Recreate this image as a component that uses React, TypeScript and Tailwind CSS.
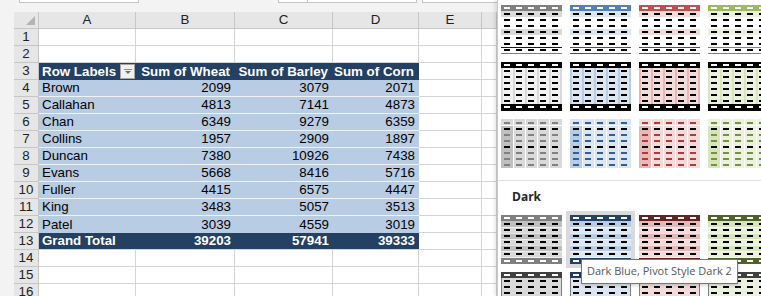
import React from "react";

const FONT = { fontFamily: '"Liberation Sans", Arial, sans-serif' };
const UI = { fontFamily: '"Open Sans", "Noto Sans", sans-serif' };

const COLS = [0, 1, 2, 3, 4];
const ROWS8 = [0, 1, 2, 3, 4, 5, 6, 7];

function dashes(y: number, color: string, k: string, dx = 3) {
  return COLS.map((c) => (
    <rect key={k + c} x={12 * c + dx} y={y} width={6} height={2} fill={color} />
  ));
}

function SwA({ a, t, l1, l2 }: { a: string; t: string; l1: string; l2: string }) {
  return (
    <svg width={61} height={49} viewBox="0 0 61 49" shapeRendering="crispEdges">
      <rect x={0} y={0} width={61} height={49} fill="#fff" />
      <rect x={0} y={0} width={61} height={6} fill={a} />
      <rect x={0} y={6} width={61} height={6} fill={t} />
      <rect x={0} y={24} width={61} height={6} fill={t} />
      <rect x={0} y={42} width={61} height={1} fill={l1} />
      <rect x={0} y={48} width={61} height={1} fill={l2} />
      {ROWS8.map((r) => dashes(6 * r + 2, r === 0 ? "#fff" : "#000", "a" + r))}
    </svg>
  );
}

function SwB({ t, s }: { t: string; s: string }) {
  return (
    <svg width={61} height={49} viewBox="0 0 61 49" shapeRendering="crispEdges">
      <rect x={0} y={0} width={61} height={49} fill={t} />
      {[0, 1, 2, 3, 4, 5].map((c) => (
        <rect key={c} x={c === 0 ? 0 : c === 5 ? 59 : 12 * c} y={6} width={2} height={37} fill={s} />
      ))}
      <rect x={0} y={0} width={61} height={6} fill="#000" />
      <rect x={0} y={42} width={61} height={7} fill="#000" />
      {ROWS8.map((r) => dashes(6 * r + 2, r === 0 || r === 7 ? "#fff" : "#000", "b" + r))}
    </svg>
  );
}

function SwC({ t, m, d }: { t: string; m: string; d: string }) {
  return (
    <svg width={61} height={49} viewBox="0 0 61 49" shapeRendering="crispEdges">
      <rect x={0} y={0} width={61} height={49} fill={t} />
      <rect x={0} y={7} width={12} height={42} fill={m} />
      <rect x={0} y={6} width={61} height={1} fill="#fff" />
      {[1, 2, 3, 4].map((c) => (
        <rect key={c} x={12 * c} y={0} width={1} height={49} fill="#fff" />
      ))}
      {ROWS8.map((r) => dashes(6 * r + 3, r === 1 || r === 4 ? "#000" : d, "c" + r))}
    </svg>
  );
}

function SwD({ h, l, m }: { h: string; l: string; m: string }) {
  return (
    <svg width={61} height={49} viewBox="0 0 61 49" shapeRendering="crispEdges">
      <rect x={0} y={0} width={61} height={49} fill={l} />
      {[1, 3, 5].map((r) => (
        <rect key={r} x={0} y={6 * r} width={61} height={6} fill={m} />
      ))}
      {[1, 2, 3, 4, 5, 6].map((r) => (
        <rect key={"w" + r} x={0} y={6 * r + 6} width={61} height={1} fill="#fff" opacity={0.6} />
      ))}
      <rect x={0} y={0} width={61} height={6} fill={h} />
      <rect x={0} y={43} width={61} height={6} fill={h} />
      {ROWS8.map((r) =>
        dashes(r === 7 ? 45 : 6 * r + 2, r === 0 || r === 7 ? "#fff" : "#000", "d" + r)
      )}
    </svg>
  );
}

function SwE({ h, b }: { h: string; b: string }) {
  return (
    <svg width={61} height={49} viewBox="0 0 61 49" shapeRendering="crispEdges">
      <rect x={0} y={0} width={61} height={49} fill={b} />
      <rect x={0.5} y={0.5} width={60} height={48} fill="none" stroke="#7f7f7f" />
      <rect x={0} y={0} width={61} height={6} fill={h} />
      {ROWS8.map((r) => dashes(6 * r + 2, r === 0 ? "#fff" : "#000", "e" + r))}
    </svg>
  );
}

function Item({ children, hover }: { children: React.ReactNode; hover?: boolean }) {
  return (
    <div className={`w-[69px] h-[57px] shrink-0 p-[4px] ${hover ? "bg-[#dadada]" : ""}`}>
      {children}
    </div>
  );
}

const data: [string, number, number, number][] = [
  ["Brown", 2099, 3079, 2071],
  ["Callahan", 4813, 7141, 4873],
  ["Chan", 6349, 9279, 6359],
  ["Collins", 1957, 2909, 1897],
  ["Duncan", 7380, 10926, 7438],
  ["Evans", 5668, 8416, 5716],
  ["Fuller", 4415, 6575, 4447],
  ["King", 3483, 5057, 3513],
  ["Patel", 3039, 4559, 3019],
];

function RowHdr({ n }: { n: number }) {
  return (
    <div className="w-[25px] shrink-0 h-full flex items-center justify-center bg-[#e6e6e6] border-r border-b border-[#c6c6c6] text-[#222]">
      {n}
    </div>
  );
}

function Gutter() {
  return <div className="w-[14px] shrink-0 h-full bg-[#f3f3f3]" />;
}

function Blank({ w }: { w: string }) {
  return <div className={`${w} shrink-0 h-full border-r border-b border-[#d4d4d4]`} />;
}

function EF() {
  return (
    <>
      <Blank w="w-[63px]" />
      <Blank w="w-[15px]" />
    </>
  );
}

function EmptyRow({ n }: { n: number }) {
  return (
    <div className="flex h-[17px] shrink-0">
      <Gutter />
      <RowHdr n={n} />
      <Blank w="w-[97px]" />
      <Blank w="w-[99px]" />
      <Blank w="w-[98px]" />
      <Blank w="w-[86px]" />
      <EF />
    </div>
  );
}

function Sheet() {
  return (
    <div className="w-[497px] shrink-0 h-[296px] overflow-hidden flex flex-col text-[13.33px] leading-none" style={FONT}>
      <div className="h-[12px] shrink-0 bg-[#f3f3f3] flex">
        <div className="ml-[19px] w-[120px] h-[3px] bg-white border-x border-b border-[#c6c6c6]" />
        <div className="ml-[139px] w-[30px] h-[3px] bg-white border-x border-b border-[#c6c6c6]" />
        <div className="ml-[0px] w-[109px] h-[3px] bg-white border-r border-b border-[#c6c6c6]" />
        <div className="ml-[5px] flex-1 h-[3px] bg-white border-l border-b border-[#c6c6c6]" />
      </div>
      <div className="flex h-[17px] shrink-0">
        <Gutter />
        <div className="w-[25px] shrink-0 h-full bg-[#e6e6e6] border-r border-b border-[#c6c6c6] relative">
          <svg className="absolute right-[3px] bottom-[3px]" width={9} height={9} viewBox="0 0 9 9">
            <polygon points="9,0 9,9 0,9" fill="#b4b4b4" />
          </svg>
        </div>
        {[
          ["A", "w-[97px]"],
          ["B", "w-[99px]"],
          ["C", "w-[98px]"],
          ["D", "w-[86px]"],
          ["E", "w-[63px]"],
          ["", "w-[15px]"],
        ].map(([l, w]) => (
          <div
            key={w}
            className={`${w} shrink-0 h-full flex items-center justify-center bg-[#e6e6e6] border-r border-b border-[#c6c6c6] text-[#222]`}
          >
            {l}
          </div>
        ))}
      </div>
      <EmptyRow n={1} />
      <EmptyRow n={2} />
      <div className="flex h-[17px] shrink-0">
        <Gutter />
        <RowHdr n={3} />
        <div className="w-[97px] shrink-0 h-full bg-[#244062] text-white font-bold flex items-center pl-[3px] relative">
          Row Labels
          <div className="absolute right-[1px] top-[1px] w-[15px] h-[15px] bg-[#f0f0f0] border border-[#a5a5a5] flex items-center justify-center">
            <svg width={8} height={6} viewBox="0 0 8 6">
              <rect x={0} y={0} width={8} height={1} fill="#8a8a8a" />
              <polygon points="1,2 7,2 4,5" fill="#6d6d6d" />
            </svg>
          </div>
        </div>
        <div className="w-[99px] shrink-0 h-full bg-[#244062] text-white font-bold flex items-center justify-end pr-[5px]">
          Sum of Wheat
        </div>
        <div className="w-[98px] shrink-0 h-full bg-[#244062] text-white font-bold flex items-center justify-end pr-[5px]">
          Sum of Barley
        </div>
        <div className="w-[86px] shrink-0 h-full bg-[#244062] text-white font-bold flex items-center justify-end pr-[5px]">
          Sum of Corn
        </div>
        <EF />
      </div>
      {data.map(([name, a, b, c], i) => (
        <div key={name} className="flex h-[17px] shrink-0">
          <Gutter />
          <RowHdr n={i + 4} />
          <div className={`w-[97px] shrink-0 h-full bg-[#b8cce4] flex items-center pl-[3px] text-black ${i < 8 ? "border-b border-[#eef3f9]" : ""}`}>
            {name}
          </div>
          <div className={`w-[99px] shrink-0 h-full bg-[#b8cce4] flex items-center justify-end pr-[4px] text-black ${i < 8 ? "border-b border-[#eef3f9]" : ""}`}>
            {a}
          </div>
          <div className={`w-[98px] shrink-0 h-full bg-[#b8cce4] flex items-center justify-end pr-[4px] text-black ${i < 8 ? "border-b border-[#eef3f9]" : ""}`}>
            {b}
          </div>
          <div className={`w-[86px] shrink-0 h-full bg-[#b8cce4] flex items-center justify-end pr-[4px] text-black ${i < 8 ? "border-b border-[#eef3f9]" : ""}`}>
            {c}
          </div>
          <EF />
        </div>
      ))}
      <div className="flex h-[17px] shrink-0">
        <Gutter />
        <RowHdr n={13} />
        <div className="w-[97px] shrink-0 h-full bg-[#244062] text-white font-bold flex items-center pl-[3px] border-b border-[#d4d4d4]">
          Grand Total
        </div>
        <div className="w-[99px] shrink-0 h-full bg-[#244062] text-white font-bold flex items-center justify-end pr-[4px] border-b border-[#d4d4d4]">
          39203
        </div>
        <div className="w-[98px] shrink-0 h-full bg-[#244062] text-white font-bold flex items-center justify-end pr-[4px] border-b border-[#d4d4d4]">
          57941
        </div>
        <div className="w-[86px] shrink-0 h-full bg-[#244062] text-white font-bold flex items-center justify-end pr-[4px] border-b border-[#d4d4d4]">
          39333
        </div>
        <EF />
      </div>
      <EmptyRow n={14} />
      <EmptyRow n={15} />
      <EmptyRow n={16} />
    </div>
  );
}

function Panel() {
  return (
    <div className="w-[264px] shrink-0 h-[296px] overflow-hidden bg-white border-l border-[#c8c8c8] pt-[1px] shadow-[-2px_0_4px_rgba(0,0,0,0.12)]">
      <div className="flex w-[276px] -ml-px">
        <Item><SwA a="#808080" t="#d9d9d9" l1="#1a1a1a" l2="#808080" /></Item>
        <Item><SwA a="#4f81bd" t="#dce6f1" l1="#2f5597" l2="#2f5597" /></Item>
        <Item><SwA a="#c0504d" t="#f2dcdb" l1="#963634" l2="#963634" /></Item>
        <Item><SwA a="#9bbb59" t="#ebf1de" l1="#76933c" l2="#76933c" /></Item>
      </div>
      <div className="flex w-[276px] -ml-px">
        <Item><SwB t="#f2f2f2" s="#d9d9d9" /></Item>
        <Item><SwB t="#dce6f1" s="#b8cce4" /></Item>
        <Item><SwB t="#f2dcdb" s="#e6b8b7" /></Item>
        <Item><SwB t="#ebf1de" s="#d8e4bc" /></Item>
      </div>
      <div className="flex w-[276px] -ml-px">
        <Item><SwC t="#d9d9d9" m="#bfbfbf" d="#808080" /></Item>
        <Item><SwC t="#dce6f1" m="#b8cce4" d="#2f5f9a" /></Item>
        <Item><SwC t="#f2dcdb" m="#e6b8b7" d="#b03a38" /></Item>
        <Item><SwC t="#ebf1de" m="#d8e4bc" d="#76933c" /></Item>
      </div>
      <div className="h-[39px] pt-[8px]">
        <div className="h-px bg-[#e1e1e1]" />
        <div className="pl-[14px] pt-[8px] text-[12px] font-bold text-[#262626] leading-[16px]" style={UI}>
          Dark
        </div>
      </div>
      <div className="flex w-[276px] -ml-px">
        <Item><SwD h="#808080" l="#d9d9d9" m="#bfbfbf" /></Item>
        <Item hover><SwD h="#244062" l="#dce6f1" m="#b8cce4" /></Item>
        <Item><SwD h="#632523" l="#f2dcdb" m="#e6b8b7" /></Item>
        <Item><SwD h="#4f6228" l="#ebf1de" m="#d8e4bc" /></Item>
      </div>
      <div className="flex w-[276px] -ml-px">
        <Item><SwE h="#404040" b="#d9d9d9" /></Item>
        <Item><SwE h="#1f3864" b="#dce6f1" /></Item>
        <Item><SwE h="#404040" b="#f2dcdb" /></Item>
        <Item><SwE h="#404040" b="#ebf1de" /></Item>
      </div>
    </div>
  );
}

export default function App() {
  return (
    <div className="w-[761px] h-[296px] overflow-hidden flex bg-white relative">
      <Sheet />
      <Panel />
      <div
        className="absolute left-[581px] top-[259px] h-[25px] px-[5px] flex items-center bg-white border border-[#767676] text-[11px] text-[#575757] whitespace-nowrap shadow-[1px_2px_3px_rgba(0,0,0,0.15)]"
        style={UI}
      >
        Dark Blue, Pivot Style Dark 2
      </div>
    </div>
  );
}
